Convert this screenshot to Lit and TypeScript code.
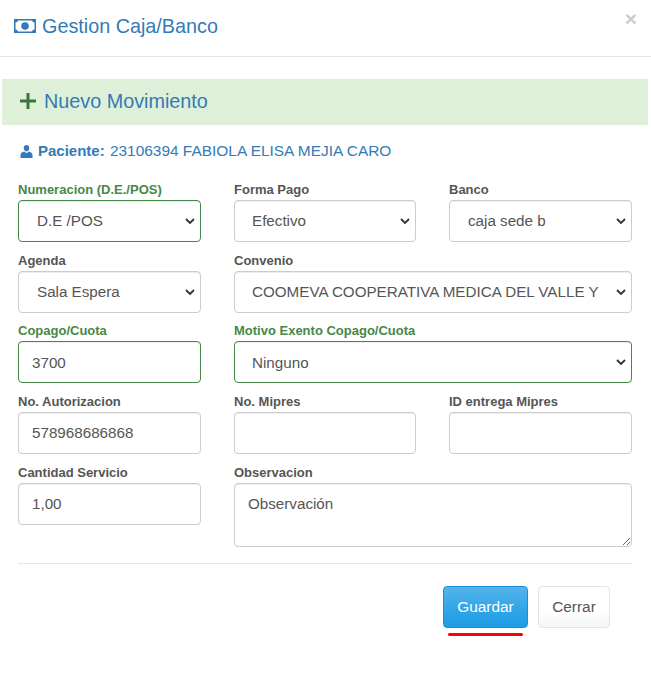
import { LitElement, html, css } from "lit";
import { customElement } from "lit/decorators.js";

@customElement("app-root")
export class AppRoot extends LitElement {
  static styles = css`
    :host { display: block; width: 651px; height: 684px; background: #fff; overflow: hidden;
      font-family: "Liberation Sans", Arial, sans-serif; font-size: 14px; color: #555; box-sizing: border-box; }
    * { box-sizing: border-box; }
    .header { height: 57px; border-bottom: 1px solid #e5e5e5; padding: 0 14px; display: flex; align-items: center; position: relative; }
    .title { font-size: 19.8px; font-weight: 400; color: #337ab7; margin: 0 0 0 6px; line-height: 20px; position: relative; top: -2px; }
    .money { width: 22px; height: 14px; display: block; position: relative; top: -2px; }
    .close { position: absolute; right: 14px; top: 8px; font-size: 21px; font-weight: 700; line-height: 21px; color: #000; opacity: .2; }
    .alert { margin: 22px 3px 0 2px; height: 46px; background: #dff0d8; color: #337ab7; display: flex; align-items: center; padding: 0 0 2px 17px; font-size: 19.8px; }
    .alert svg { width: 18px; height: 18px; margin-right: 7px; }
    .patient { margin: 17px 0 0 20px; height: 18px; display: flex; align-items: center; color: #337ab7; font-size: 15.45px; white-space: pre; }
    .patient svg { width: 13px; height: 13px; margin-right: 5px; }
    .patient b { font-weight: 700; font-size: 15px; margin-right: 1px; }
    .form { display: grid; grid-template-columns: 183px 182px 183px; column-gap: 33px; row-gap: 9.8px; margin: 21px 0 0 18px; width: 614px; align-items: start; }
    .wide { grid-column: span 2; }
    .field { display: flex; flex-direction: column; }
    label { font-size: 13px; font-weight: 700; line-height: 18.57px; height: 18.9px; color: #555; display: block; }
    .ok label { color: #468847; }
    .ctl { width: 100%; height: 42px; border: 1px solid #ccc; border-radius: 4px; background: #fff; color: #555;
      font: 15.2px "Liberation Sans", Arial, sans-serif; padding: 0 13px; box-shadow: inset 0 1px 1px rgba(0,0,0,.075); outline: none; }
    select.ctl { appearance: none; -webkit-appearance: none; padding: 0 29px 0 17px;
      background-image: url("data:image/svg+xml,%3Csvg xmlns='http://www.w3.org/2000/svg' width='10' height='6' viewBox='0 0 10 6'%3E%3Cpath d='M1 1l4 4 4-4' fill='none' stroke='%23333' stroke-width='1.800'/%3E%3C/svg%3E");
      background-repeat: no-repeat; background-position: right 5px center; }
    select.ctl.pad { padding-left: 18px; }
    .ok .ctl { border-color: #468847; }
    textarea.ctl { height: 64px; padding: 10px 13px; resize: vertical; display: block; line-height: 20px; }
    textarea.ctl::placeholder { color: #555; opacity: 1; }
    .rule { height: 1px; background: #e5e5e5; margin: 16px 19px 0 18px; }
    .actions { display: flex; justify-content: flex-end; gap: 10px; margin: 22px 41px 0 0; align-items: flex-start; }
    .btn { height: 42px; border-radius: 4px; font: 15.4px "Liberation Sans", Arial, sans-serif; display: block; cursor: pointer; padding: 0; }
    .save { width: 85px; color: #fff; border: 1px solid #1b8fd8; background: linear-gradient(#54b4eb, #2fa4e7 60%, #1d9ce5); }
    .cancel { width: 72px; color: #555; border: 1px solid #e3e3e3; background: linear-gradient(#fff, #fff 60%, #f5f5f5); }
    .save-wrap { position: relative; }
    .mark { position: absolute; left: 5px; top: 47px; width: 75px; height: 3px; background: #f00; border-radius: 2px; }
  `;

  private field(name: string, control: unknown, ok = false, wide = false) {
    return html`<div class="field ${ok ? "ok" : ""} ${wide ? "wide" : ""}"><label>${name}</label>${control}</div>`;
  }
  private sel(v: string, pad = false) {
    return html`<select class="ctl ${pad ? "pad" : ""}"><option>${v}</option></select>`;
  }
  private inp(v: string) {
    return html`<input class="ctl" .value=${v} />`;
  }

  render() {
    return html`
      <div class="header">
        <svg class="money" viewBox="0 0 22 14"><path fill="#337ab7" fill-rule="evenodd" d="M0 0h22v14H0zM1.500 3.500v7a2.500 2.500 0 0 1 2.500 2h14a2.500 2.500 0 0 1 2.500-2v-7a2.500 2.500 0 0 1-2.500-2H4a2.500 2.500 0 0 1-2.500 2zM11 3.200a3.800 3.800 0 1 1 0 7.600 3.800 3.800 0 0 1 0-7.600z"/></svg>
        <h4 class="title">Gestion Caja/Banco</h4>
        <span class="close">×</span>
      </div>
      <div class="alert">
        <svg viewBox="0 0 18 18"><path fill="#3c763d" d="M7.500 1h3v6.500H17v3h-6.500V17h-3v-6.500H1v-3h6.500z"/></svg>Nuevo Movimiento
      </div>
      <div class="patient">
        <svg viewBox="0 0 13 13"><path fill="#337ab7" d="M6.500 0C8.200 0 9.300 1.300 9.300 3.100 9.300 4.800 8.300 6.400 6.500 6.400S3.700 4.800 3.700 3.100C3.700 1.300 4.800 0 6.500 0zM4.200 6.500 6.500 8.200 8.800 6.500C11 7 12.500 8 12.500 10V13H.5V10C.5 8 2 7 4.200 6.500z"/></svg><span><b>Paciente: </b>23106394 FABIOLA ELISA MEJIA CARO</span>
      </div>
      <div class="form">
        ${this.field("Numeracion (D.E./POS)", this.sel("D.E /POS", true), true)}
        ${this.field("Forma Pago", this.sel("Efectivo"))}
        ${this.field("Banco", this.sel("caja sede b", true))}
        ${this.field("Agenda", this.sel("Sala Espera", true))}
        ${this.field("Convenio", this.sel("COOMEVA COOPERATIVA MEDICA DEL VALLE Y DE LOS PROFESIONALES"), false, true)}
        ${this.field("Copago/Cuota", this.inp("3700"), true)}
        ${this.field("Motivo Exento Copago/Cuota", this.sel("Ninguno"), true, true)}
        ${this.field("No. Autorizacion", this.inp("578968686868"))}
        ${this.field("No. Mipres", this.inp(""))}
        ${this.field("ID entrega Mipres", this.inp(""))}
        ${this.field("Cantidad Servicio", this.inp("1,00"))}
        ${this.field("Observacion", html`<textarea class="ctl" placeholder="Observación"></textarea>`, false, true)}
      </div>
      <div class="rule"></div>
      <div class="actions">
        <div class="save-wrap"><button class="btn save">Guardar</button><div class="mark"></div></div>
        <button class="btn cancel">Cerrar</button>
      </div>
    `;
  }
}
